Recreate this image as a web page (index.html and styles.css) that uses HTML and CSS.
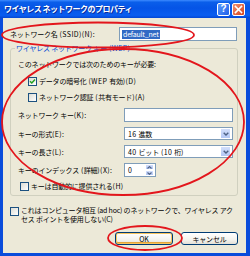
FILE: index.html
```html
<!DOCTYPE html>
<html lang="ja">
<head>
<meta charset="utf-8">
<title>ワイヤレス ネットワークのプロパティ</title>
<link rel="stylesheet" href="styles.css">
</head>
<body>
<div class="window">
  <div class="titlebar">
    <span class="title">ワイヤレス ネットワークのプロパティ</span>
    <span class="tbtn help">?</span>
    <span class="tbtn close"><svg width="9" height="9" viewBox="0 0 9 9"><path d="M1.5 1.5 L7.5 7.5 M7.5 1.5 L1.5 7.5" stroke="#fff" stroke-width="1.6" stroke-linecap="square"/></svg></span>
  </div>
  <div class="client">
    <div class="ssid-row">
      <span class="lbl ssid-lbl">ネットワーク名<span class="a"> (SSID)(N):</span></span>
      <div class="input ssid-input"><span class="sel">default_net</span></div>
    </div>
    <fieldset class="group">
      <legend>ワイヤレス ネットワーク キー<span class="a"> (WEP)</span></legend>
      <div class="line">このネットワークでは次のためのキーが必要:</div>
      <div class="check indent r1"><span class="box"><svg width="7" height="7" viewBox="0 0 7 7"><path d="M1 3.2 L2.8 5 L6 1.5" fill="none" stroke="#21A121" stroke-width="1.5"/></svg></span><span>データの暗号化<span class="a"> (WEP </span>有効<span class="a">)(D)</span></span></div>
      <div class="check indent r2"><span class="box"></span><span>ネットワーク認証<span class="a"> (</span>共有モード<span class="a">)(A)</span></span></div>
      <div class="frow r3"><span class="flbl">ネットワーク キー<span class="a">(K):</span></span><div class="input fctl"></div></div>
      <div class="frow combo-row r4"><span class="flbl">キーの形式<span class="a">(E):</span></span><div class="combo fctl"><span class="val"><span class="a">16 </span>進数</span><span class="drop"><svg width="6" height="4" viewBox="0 0 6 4"><path d="M0.7 0.7 L3 3 L5.3 0.7" fill="none" stroke="#4D6185" stroke-width="1.4"/></svg></span></div></div>
      <div class="frow combo-row r5"><span class="flbl">キーの長さ<span class="a">(L):</span></span><div class="combo fctl"><span class="val"><span class="a">40 </span>ビット<span class="a"> (10 </span>桁<span class="a">)</span></span><span class="drop"><svg width="6" height="4" viewBox="0 0 6 4"><path d="M0.7 0.7 L3 3 L5.3 0.7" fill="none" stroke="#4D6185" stroke-width="1.4"/></svg></span></div></div>
      <div class="frow r6"><span class="flbl">キーのインデックス<span class="a"> (</span>詳細<span class="a">)(X):</span></span><div class="spin"><span class="val">0</span><span class="spinbtns"><span class="sb"><svg width="5" height="3" viewBox="0 0 5 3"><path d="M0.5 2.5 L2.5 0.6 L4.5 2.5" fill="none" stroke="#4D6185" stroke-width="1.1"/></svg></span><span class="sb"><svg width="5" height="3" viewBox="0 0 5 3"><path d="M0.5 0.5 L2.5 2.4 L4.5 0.5" fill="none" stroke="#4D6185" stroke-width="1.1"/></svg></span></span></div></div>
      <div class="check r7"><span class="box"></span><span>キーは自動的に提供される<span class="a">(H)</span></span></div>
    </fieldset>
    <div class="check adhoc"><span class="box"></span><span class="adhoc-text">これはコンピュータ相互 (ad hoc) のネットワークで、ワイヤレス アクセス ポイントを使用しない(C)</span></div>
    <div class="buttons">
      <span class="btn default">OK</span>
      <span class="btn">キャンセル</span>
    </div>
  </div>
  <svg class="marks" width="250" height="256" viewBox="0 0 250 256">
    <ellipse cx="98" cy="35" rx="96" ry="12.5" fill="none" stroke="#E3161C" stroke-width="1.8"/>
    <ellipse cx="123" cy="122" rx="121" ry="73" fill="none" stroke="#E3161C" stroke-width="1.8"/>
    <ellipse cx="145" cy="238" rx="37" ry="12" fill="none" stroke="#E3161C" stroke-width="1.8"/>
  </svg>
</div>
</body>
</html>
```
FILE: styles.css
```css
* { box-sizing: border-box; }
html, body { margin: 0; padding: 0; width: 250px; height: 256px; overflow: hidden; }
body {
  font-family: "Noto Sans CJK JP", "Noto Sans", sans-serif;
  font-size: 7px;
  line-height: 10px;
  letter-spacing: -0.2px;
  color: #000;
}
.a { letter-spacing: 0.4px; }
.window {
  position: relative;
  width: 250px;
  height: 256px;
  background: #0A4CDB;
  display: flex;
  flex-direction: column;
}
.titlebar {
  height: 18px;
  flex: none;
  display: flex;
  align-items: center;
  gap: 2px;
  padding: 0 5px 0 4px;
  background: linear-gradient(to bottom, #3D8BFF 0%, #0A5EEA 12%, #0554E6 45%, #0A5DF0 85%, #0447D4 100%);
}
.title {
  flex: 1;
  color: #fff;
  font-weight: bold;
  font-size: 8px;
  letter-spacing: -0.5px;
  text-shadow: 1px 1px 0 #0A2C9A;
  white-space: nowrap;
}
.tbtn {
  width: 13px;
  height: 13px;
  border: 1px solid #fff;
  border-radius: 2px;
  display: flex;
  align-items: center;
  justify-content: center;
  color: #fff;
  font-weight: bold;
  font-size: 10px;
  font-family: "Liberation Sans", sans-serif;
}
.help { background: linear-gradient(135deg, #5A9BFF, #1F5FE8); }
.close { background: linear-gradient(135deg, #F09070, #D8441C); }
.client {
  flex: 1;
  margin: 0 4px 3px 3px;
  background: #ECE9D8;
  padding: 9px 8px 0 7px;
  display: flex;
  flex-direction: column;
}
.ssid-row { display: flex; align-items: center; height: 14px; }
.ssid-lbl { width: 109px; flex: none; white-space: nowrap; }
.input {
  height: 14px;
  border: 1px solid #7F9DB9;
  background: #fff;
  display: flex;
  align-items: center;
  padding-left: 2px;
}
.ssid-input { width: 118px; }
.sel { background: #316AC5; color: #fff; padding: 0 1px; line-height: 9px; }
.group {
  margin: 2px 0 0 0;
  padding: 6px 4px 4px 7px;
  border: 1px solid #D0D0BF;
  border-radius: 3px;
  min-width: 0;
}
.group legend {
  color: #0046D5;
  padding: 0 1px;
  margin-left: -3px;
  line-height: 10px;
}
.line { height: 10px; white-space: nowrap; }
.check { display: flex; align-items: center; gap: 2px; height: 10px; white-space: nowrap; }
.indent { padding-left: 10px; }
.box {
  width: 9px;
  height: 9px;
  flex: none;
  border: 1px solid #1C5180;
  background: linear-gradient(135deg, #DCDCD4, #FFFFFF);
  display: flex;
  align-items: center;
  justify-content: center;
}
.r1 { margin-top: 7px; }
.r2 { margin-top: 6px; }
.frow { display: flex; align-items: center; height: 14px; white-space: nowrap; }
.combo-row { height: 13px; }
.r3 { margin-top: 6px; }
.r4 { margin-top: 5px; }
.r5 { margin-top: 5px; }
.r6 { margin-top: 5px; }
.r7 { margin-top: 4px; padding-left: 2px; }
.flbl { width: 106px; flex: none; }
.fctl { width: 110px; }
.combo {
  height: 13px;
  border: 1px solid #7F9DB9;
  background: #fff;
  display: flex;
  align-items: center;
  padding: 0 1px 0 3px;
}
.combo .val { flex: 1; }
.drop {
  width: 11px;
  height: 11px;
  border: 1px solid #fff;
  border-radius: 1px;
  background: linear-gradient(to bottom, #D2DEFB, #B3C8F5);
  display: flex;
  align-items: center;
  justify-content: center;
}
.spin {
  width: 32px;
  height: 14px;
  border: 1px solid #7F9DB9;
  background: #fff;
  display: flex;
  align-items: center;
  padding: 0 1px 0 3px;
}
.spin .val { flex: 1; }
.spinbtns { display: flex; flex-direction: column; width: 9px; height: 12px; }
.sb {
  flex: 1;
  border: 1px solid #fff;
  border-radius: 1px;
  background: linear-gradient(to bottom, #D2DEFB, #B3C8F5);
  display: flex;
  align-items: center;
  justify-content: center;
}
.adhoc { margin-top: 10px; height: auto; align-items: flex-start; white-space: normal; gap: 2px; }
.adhoc .box { margin-top: 1px; }
.adhoc-text { line-height: 9px; width: 218px; line-break: anywhere; }
.buttons { display: flex; justify-content: flex-end; gap: 8px; margin-top: 8px; }
.btn {
  height: 13px;
  width: 57px;
  border: 1px solid #003C74;
  border-radius: 3px;
  background: linear-gradient(to bottom, #FFFFFF 0%, #F4F3EE 60%, #E3E0D6 100%);
  display: flex;
  align-items: center;
  justify-content: center;
}
.btn.default { width: 58px; box-shadow: inset 0 0 0 1px #F7C45E, inset 0 -1px 0 1px #E5A53A; }
.marks { position: absolute; left: 0; top: 0; pointer-events: none; }
```
